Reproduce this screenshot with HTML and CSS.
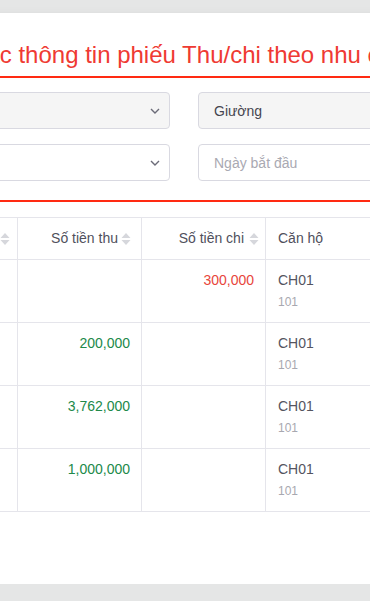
FILE: index.html
```html
<!doctype html>
<html>
<head>
<meta charset="utf-8">
<link rel="stylesheet" href="styles.css">
<title>Phiếu thu chi</title>
</head>
<body>
<div class="card">
  <h1 class="title">Danh sách các thông tin phiếu Thu/chi theo nhu cầu</h1>

  <div class="filters">
    <div class="field field-locked">
      <span>Tòa A</span>
      <svg class="chevron" viewBox="0 0 10 6"><path d="M1 1l4 4 4-4" /></svg>
    </div>
    <div class="field field-locked">
      <span>Giường</span>
      <svg class="chevron" viewBox="0 0 10 6"><path d="M1 1l4 4 4-4" /></svg>
    </div>
    <div class="field">
      <span class="placeholder">Căn hộ</span>
      <svg class="chevron" viewBox="0 0 10 6"><path d="M1 1l4 4 4-4" /></svg>
    </div>
    <div class="field">
      <span class="placeholder">Ngày bắt đầu</span>
    </div>
  </div>

  <div class="divider"></div>

  <table class="ledger">
    <colgroup>
      <col class="col-date">
      <col class="col-money">
      <col class="col-money">
      <col class="col-unit">
      <col class="col-note">
    </colgroup>
    <thead>
      <tr>
        <th class="th-first"><div class="th-inner th-split">Ngày <svg class="sort" viewBox="0 0 10 14"><path d="M5 1l4.5 5H.5z M5 13L.5 8h9z" /></svg></div></th>
        <th><div class="th-inner">Số tiền thu <svg class="sort" viewBox="0 0 10 14"><path d="M5 1l4.5 5H.5z M5 13L.5 8h9z" /></svg></div></th>
        <th class="th-tight"><div class="th-inner th-wide">Số tiền chi <svg class="sort" viewBox="0 0 10 14"><path d="M5 1l4.5 5H.5z M5 13L.5 8h9z" /></svg></div></th>
        <th><div class="th-inner th-left">Căn hộ</div></th>
        <th><div class="th-inner th-left">Ghi chú</div></th>
      </tr>
    </thead>
    <tbody>
      <tr>
        <td>02/03</td>
        <td class="money"></td>
        <td class="money money-out">300,000</td>
        <td><div class="unit">CH01</div><div class="unit-code">101</div></td>
        <td></td>
      </tr>
      <tr>
        <td>05/03</td>
        <td class="money money-in">200,000</td>
        <td class="money"></td>
        <td><div class="unit">CH01</div><div class="unit-code">101</div></td>
        <td></td>
      </tr>
      <tr>
        <td>10/03</td>
        <td class="money money-in">3,762,000</td>
        <td class="money"></td>
        <td><div class="unit">CH01</div><div class="unit-code">101</div></td>
        <td></td>
      </tr>
      <tr>
        <td>15/03</td>
        <td class="money money-in">1,000,000</td>
        <td class="money"></td>
        <td><div class="unit">CH01</div><div class="unit-code">101</div></td>
        <td></td>
      </tr>
    </tbody>
  </table>
</div>
</body>
</html>
```
FILE: styles.css
```css
html,
body {
    overflow: hidden;
}
body {
    margin: 0;
    padding-top: 13px;
    background: #e5e6e6;
    font-family: "Liberation Sans", Arial, sans-serif;
    color: #4b4b56;
}
.card {
    width: 1000px;
    margin-left: -167px;
    padding: 26px 20px 72px;
    background: #fff;
    box-shadow: 0 3px 10px rgba(0, 0, 0, 0.08);
}
.title {
    margin: 0;
    padding-bottom: 5px;
    font-size: 24px;
    line-height: 32px;
    font-weight: normal;
    color: #ef3a33;
    white-space: nowrap;
    border-bottom: 2px solid #ff2a12;
}
.filters {
    display: grid;
    grid-template-columns: 317px 316px;
    column-gap: 28px;
    row-gap: 15px;
    margin-top: 14px;
}
.field {
    box-sizing: border-box;
    height: 37px;
    display: flex;
    align-items: center;
    justify-content: space-between;
    padding: 0 9px 0 15px;
    border: 1px solid #d9d9e1;
    border-radius: 4px;
    background: #fff;
    font-size: 14px;
    color: #45454f;
}
.field-locked {
    background: #f5f5f5;
}
.placeholder {
    color: #a9a9b2;
}
.chevron {
    width: 10px;
    height: 6px;
    fill: none;
    stroke: #6b6b78;
    stroke-width: 1.4;
}
.divider {
    height: 2px;
    margin-top: 19px;
    background: #ff2a12;
}
.ledger {
    width: 696px;
    margin-top: 15px;
    border-collapse: collapse;
    table-layout: fixed;
    font-size: 14px;
}
.col-date {
    width: 164px;
}
.col-money,
.col-unit {
    width: 124px;
}
.col-note {
    width: 160px;
}
.ledger th,
.ledger td {
    border: 1px solid #e5e5eb;
}
.ledger th {
    padding: 11px 10px 11px 12px;
    font-weight: normal;
    line-height: 19px;
    color: #50505c;
}
.ledger th.th-first {
    padding-right: 7px;
}
.ledger th.th-tight {
    padding-right: 6px;
}
.th-inner {
    display: flex;
    align-items: center;
    justify-content: flex-end;
    gap: 3px;
}
.th-wide {
    gap: 5px;
}
.th-split {
    justify-content: space-between;
    color: #fff;
}
.th-left {
    justify-content: flex-start;
}
.sort {
    width: 10px;
    height: 14px;
    fill: #d6d7dc;
}
.ledger td {
    padding: 10px 11px 11px 12px;
    line-height: 20px;
    vertical-align: top;
    color: #fff;
}
.ledger td.money {
    text-align: right;
}
.money-in {
    color: #21894a !important;
}
.money-out {
    color: #e8453c !important;
}
.unit {
    color: #55555f;
}
.unit-code {
    margin-top: 3px;
    font-size: 12px;
    line-height: 18px;
    color: #a8a8b0;
}
```
